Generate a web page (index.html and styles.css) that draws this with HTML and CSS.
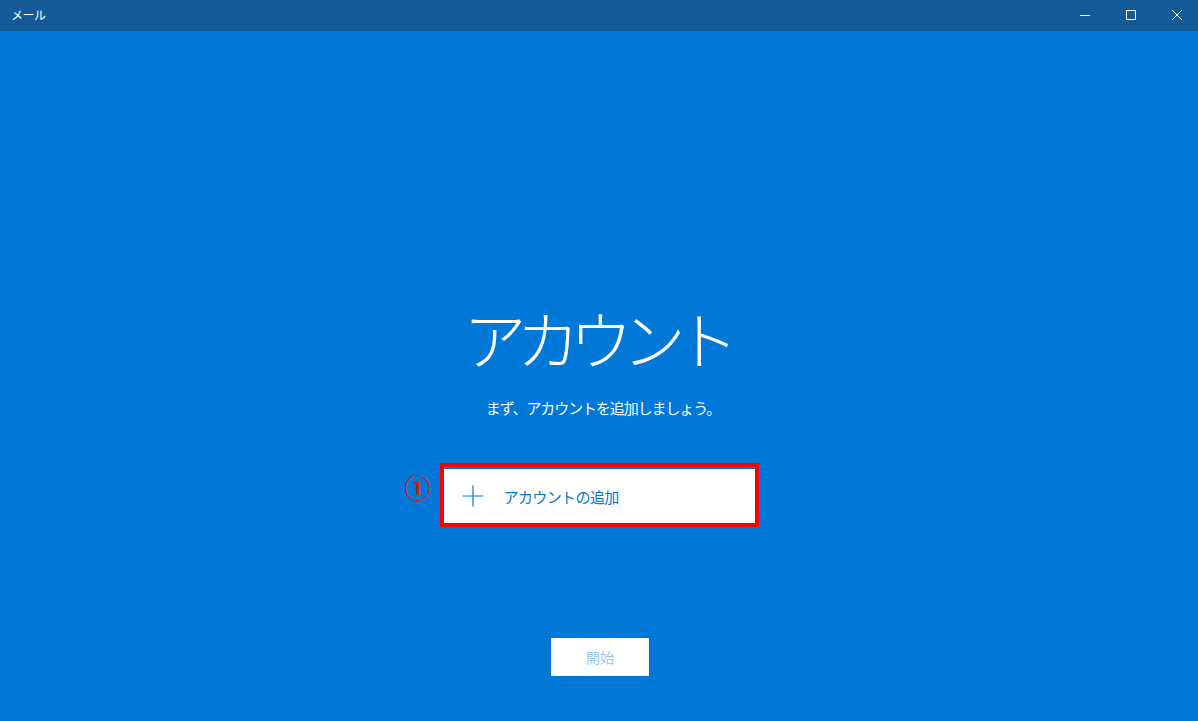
FILE: index.html
```html
<!DOCTYPE html>
<html lang="ja">
<head>
<meta charset="utf-8">
<title>メール</title>
<link rel="stylesheet" href="styles.css">
</head>
<body>
<div class="app">
  <header class="titlebar">
    <div class="app-title">メール</div>
    <div class="controls">
      <div class="ctl">
        <svg width="12" height="12" viewBox="0 0 12 12"><path d="M1 6.5H11" stroke="#fff" stroke-width="1" fill="none"/></svg>
      </div>
      <div class="ctl">
        <svg width="12" height="12" viewBox="0 0 12 12"><rect x="1.5" y="1.5" width="9" height="9" stroke="#fff" stroke-width="1" fill="none"/></svg>
      </div>
      <div class="ctl">
        <svg width="12" height="12" viewBox="0 0 12 12"><path d="M1 1L11 11M11 1L1 11" stroke="#fff" stroke-width="1" fill="none"/></svg>
      </div>
    </div>
  </header>
  <main class="content">
    <h1 class="heading">アカウント</h1>
    <p class="sub">まず、アカウントを追加しましょう。</p>
    <div class="add-row">
      <span class="marker">①</span>
      <div class="highlight">
        <button class="add-btn">
          <svg class="plus" width="22" height="22" viewBox="0 0 22 22"><path d="M11 0.5V21.5M0.5 11H21.5" stroke="#0078d7" stroke-width="1.2" fill="none"/></svg>
          <span class="add-label">アカウントの追加</span>
        </button>
      </div>
    </div>
    <button class="start" disabled>開始</button>
  </main>
</div>
</body>
</html>
```
FILE: styles.css
```css
html, body {
  margin: 0;
  padding: 0;
  height: 100%;
}
body {
  font-family: "Noto Sans CJK JP", "Noto Sans", sans-serif;
  background: #0078d7;
  color: #fff;
}
.app {
  display: flex;
  flex-direction: column;
  height: 100vh;
}
.titlebar {
  height: 31px;
  background: #135a97;
  display: flex;
  align-items: stretch;
  justify-content: space-between;
  flex-shrink: 0;
}
.app-title {
  font-size: 12px;
  line-height: 30px;
  padding-left: 11px;
  letter-spacing: -0.5px;
}
.controls {
  display: flex;
}
.ctl {
  width: 46px;
  display: flex;
  align-items: center;
  justify-content: center;
  padding-left: 4px;
  padding-bottom: 1px;
  box-sizing: border-box;
}
.content {
  flex: 1;
  display: flex;
  flex-direction: column;
  align-items: center;
  padding-top: 262px;
}
.heading {
  margin: 0;
  font-size: 63px;
  font-weight: 300;
  line-height: 88px;
  letter-spacing: -10px;
  padding-right: 6px;
}
.sub {
  margin: 0;
  margin-top: 16px;
  padding-left: 8px;
  font-size: 15px;
  font-weight: 400;
  line-height: 22px;
  letter-spacing: -1.1px;
}
.add-row {
  position: relative;
  margin-top: 44px;
}
.marker {
  position: absolute;
  left: -35px;
  top: 9px;
  color: #e81414;
  font-size: 26px;
  line-height: 30px;
  font-weight: 700;
}
.highlight {
  border: 4px solid #ff0000;
  width: 311px;
  height: 54px;
  box-sizing: content-box;
  padding-top: 2px;
  background: #0078d7;
}
.add-btn {
  width: 100%;
  height: 54px;
  margin: 0;
  border: none;
  background: #fff;
  display: flex;
  align-items: center;
  padding: 0 0 0 18px;
  font-family: inherit;
  cursor: pointer;
}
.plus {
  flex-shrink: 0;
}
.add-label {
  margin-left: 20px;
  color: #0078d7;
  font-size: 15px;
  letter-spacing: -0.6px;
}
.start {
  margin-top: 111px;
  margin-left: 2px;
  width: 98px;
  height: 38px;
  border: none;
  background: #fff;
  color: #99c9ef;
  font-family: inherit;
  font-size: 14px;
  padding: 0;
}
```
